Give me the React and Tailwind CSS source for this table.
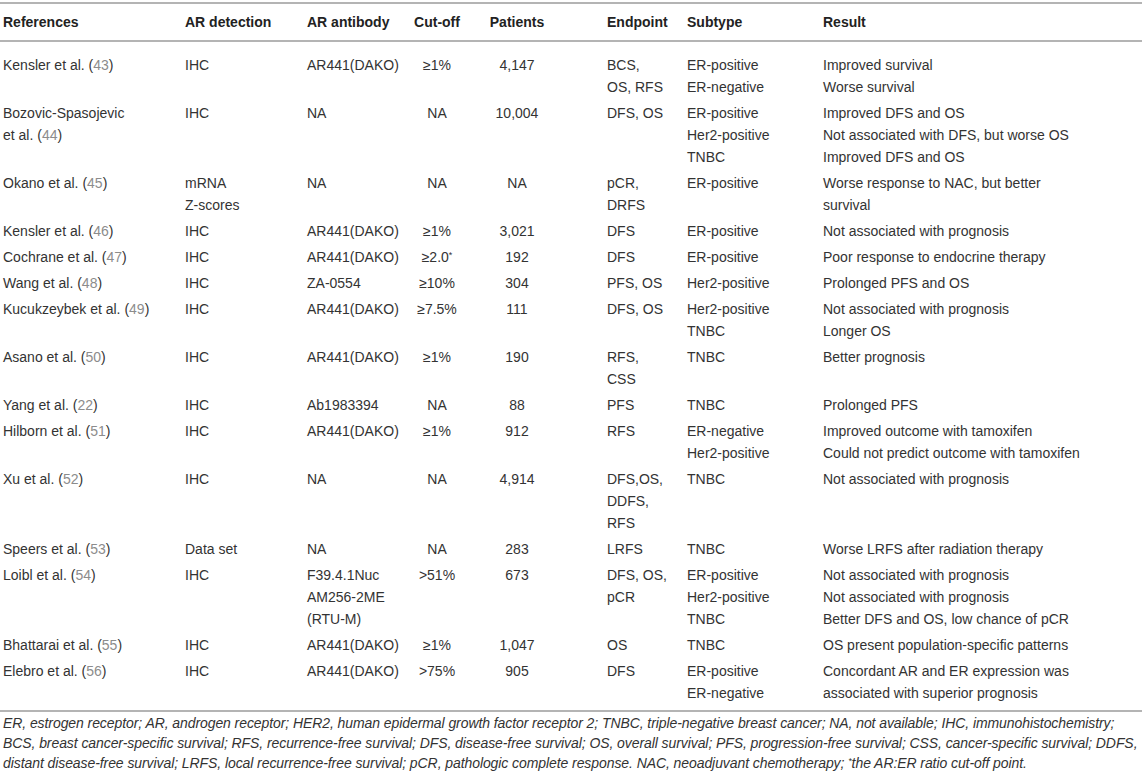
import React from "react";

const R = ({ n }) => <span className="text-[#8c8c8c]">{n}</span>;

const rows = [
  { ref: [<>Kensler et al. (<R n="43" />)</>], det: ["IHC"], ab: ["AR441(DAKO)"], cut: ["≥1%"], pat: ["4,147"], end: ["BCS,", "OS, RFS"], sub: ["ER-positive", "ER-negative"], res: ["Improved survival", "Worse survival"] },
  { ref: ["Bozovic-Spasojevic", <>et al. (<R n="44" />)</>], det: ["IHC"], ab: ["NA"], cut: ["NA"], pat: ["10,004"], end: ["DFS, OS"], sub: ["ER-positive", "Her2-positive", "TNBC"], res: ["Improved DFS and OS", "Not associated with DFS, but worse OS", "Improved DFS and OS"] },
  { ref: [<>Okano et al. (<R n="45" />)</>], det: ["mRNA", "Z-scores"], ab: ["NA"], cut: ["NA"], pat: ["NA"], end: ["pCR,", "DRFS"], sub: ["ER-positive"], res: ["Worse response to NAC, but better", "survival"] },
  { ref: [<>Kensler et al. (<R n="46" />)</>], det: ["IHC"], ab: ["AR441(DAKO)"], cut: ["≥1%"], pat: ["3,021"], end: ["DFS"], sub: ["ER-positive"], res: ["Not associated with prognosis"] },
  { ref: [<>Cochrane et al. (<R n="47" />)</>], det: ["IHC"], ab: ["AR441(DAKO)"], cut: [<>≥2.0<sup className="text-[9px]">*</sup></>], pat: ["192"], end: ["DFS"], sub: ["ER-positive"], res: ["Poor response to endocrine therapy"] },
  { ref: [<>Wang et al. (<R n="48" />)</>], det: ["IHC"], ab: ["ZA-0554"], cut: ["≥10%"], pat: ["304"], end: ["PFS, OS"], sub: ["Her2-positive"], res: ["Prolonged PFS and OS"] },
  { ref: [<>Kucukzeybek et al. (<R n="49" />)</>], det: ["IHC"], ab: ["AR441(DAKO)"], cut: ["≥7.5%"], pat: ["111"], end: ["DFS, OS"], sub: ["Her2-positive", "TNBC"], res: ["Not associated with prognosis", "Longer OS"] },
  { ref: [<>Asano et al. (<R n="50" />)</>], det: ["IHC"], ab: ["AR441(DAKO)"], cut: ["≥1%"], pat: ["190"], end: ["RFS,", "CSS"], sub: ["TNBC"], res: ["Better prognosis"] },
  { ref: [<>Yang et al. (<R n="22" />)</>], det: ["IHC"], ab: ["Ab1983394"], cut: ["NA"], pat: ["88"], end: ["PFS"], sub: ["TNBC"], res: ["Prolonged PFS"] },
  { ref: [<>Hilborn et al. (<R n="51" />)</>], det: ["IHC"], ab: ["AR441(DAKO)"], cut: ["≥1%"], pat: ["912"], end: ["RFS"], sub: ["ER-negative", "Her2-positive"], res: ["Improved outcome with tamoxifen", "Could not predict outcome with tamoxifen"] },
  { ref: [<>Xu et al. (<R n="52" />)</>], det: ["IHC"], ab: ["NA"], cut: ["NA"], pat: ["4,914"], end: ["DFS,OS,", "DDFS,", "RFS"], sub: ["TNBC"], res: ["Not associated with prognosis"] },
  { ref: [<>Speers et al. (<R n="53" />)</>], det: ["Data set"], ab: ["NA"], cut: ["NA"], pat: ["283"], end: ["LRFS"], sub: ["TNBC"], res: ["Worse LRFS after radiation therapy"] },
  { ref: [<>Loibl et al. (<R n="54" />)</>], det: ["IHC"], ab: ["F39.4.1Nuc", "AM256-2ME", "(RTU-M)"], cut: [">51%"], pat: ["673"], end: ["DFS, OS,", "pCR"], sub: ["ER-positive", "Her2-positive", "TNBC"], res: ["Not associated with prognosis", "Not associated with prognosis", "Better DFS and OS, low chance of pCR"] },
  { ref: [<>Bhattarai et al. (<R n="55" />)</>], det: ["IHC"], ab: ["AR441(DAKO)"], cut: ["≥1%"], pat: ["1,047"], end: ["OS"], sub: ["TNBC"], res: ["OS present population-specific patterns"] },
  { ref: [<>Elebro et al. (<R n="56" />)</>], det: ["IHC"], ab: ["AR441(DAKO)"], cut: [">75%"], pat: ["905"], end: ["DFS"], sub: ["ER-positive", "ER-negative"], res: ["Concordant AR and ER expression was", "associated with superior prognosis"] },
];

const Lines = ({ items }) => items.map((t, i) => <div key={i}>{t}</div>);

export default function App() {
  return (
    <div className="w-[1142px] h-[780px] bg-white overflow-hidden text-[#333] text-[14px]" style={{ fontFamily: '"Liberation Sans", Arial, Helvetica, sans-serif' }}>
      <div className="pt-[2px]">
        <table className="w-full table-fixed border-collapse leading-[22px]">
          <colgroup>
            <col className="w-[182px]" />
            <col className="w-[122px]" />
            <col className="w-[96px]" />
            <col className="w-[74px]" />
            <col className="w-[86px]" />
            <col className="w-[44px]" />
            <col className="w-[80px]" />
            <col className="w-[136px]" />
            <col />
          </colgroup>
          <thead>
            <tr className="border-t-2 border-b-2 border-[#b4b4b4] text-[#222] font-bold">
              <th className="text-left font-bold pl-[3px] h-[38px]">References</th>
              <th className="text-left font-bold pl-[3px]">AR detection</th>
              <th className="text-left font-bold pl-[3px]">AR antibody</th>
              <th className="text-center font-bold">Cut-off</th>
              <th className="text-center font-bold">Patients</th>
              <th></th>
              <th className="text-left font-bold pl-[3px]">Endpoint</th>
              <th className="text-left font-bold pl-[3px]">Subtype</th>
              <th className="text-left font-bold pl-[3px]">Result</th>
            </tr>
          </thead>
          <tbody>
            {rows.map((r, i) => {
              const pad = i === 0 ? "pt-[12px] pb-[2px]" : i === rows.length - 1 ? "pt-[2px] pb-[6px]" : "py-[2px]";
              return (
                <tr key={i} className={i === rows.length - 1 ? "border-b-2 border-[#b4b4b4]" : ""}>
                  <td className={`align-top pl-[3px] ${pad}`}><Lines items={r.ref} /></td>
                  <td className={`align-top pl-[3px] ${pad}`}><Lines items={r.det} /></td>
                  <td className={`align-top pl-[3px] ${pad}`}><Lines items={r.ab} /></td>
                  <td className={`align-top text-center ${pad}`}><Lines items={r.cut} /></td>
                  <td className={`align-top text-center ${pad}`}><Lines items={r.pat} /></td>
                  <td className={pad}></td>
                  <td className={`align-top pl-[3px] ${pad}`}><Lines items={r.end} /></td>
                  <td className={`align-top pl-[3px] ${pad}`}><Lines items={r.sub} /></td>
                  <td className={`align-top pl-[3px] ${pad}`}><Lines items={r.res} /></td>
                </tr>
              );
            })}
          </tbody>
        </table>
        <div className="italic leading-[20px] pl-[3px] pt-[1px] whitespace-nowrap tracking-[-0.08px]">
          <div>ER, estrogen receptor; AR, androgen receptor; HER2, human epidermal growth factor receptor 2; TNBC, triple-negative breast cancer; NA, not available; IHC, immunohistochemistry;</div>
          <div>BCS, breast cancer-specific survival; RFS, recurrence-free survival; DFS, disease-free survival; OS, overall survival; PFS, progression-free survival; CSS, cancer-specific survival; DDFS,</div>
          <div>distant disease-free survival; LRFS, local recurrence-free survival; pCR, pathologic complete response. NAC, neoadjuvant chemotherapy; <sup className="text-[9px]">*</sup>the AR:ER ratio cut-off point.</div>
        </div>
      </div>
    </div>
  );
}
